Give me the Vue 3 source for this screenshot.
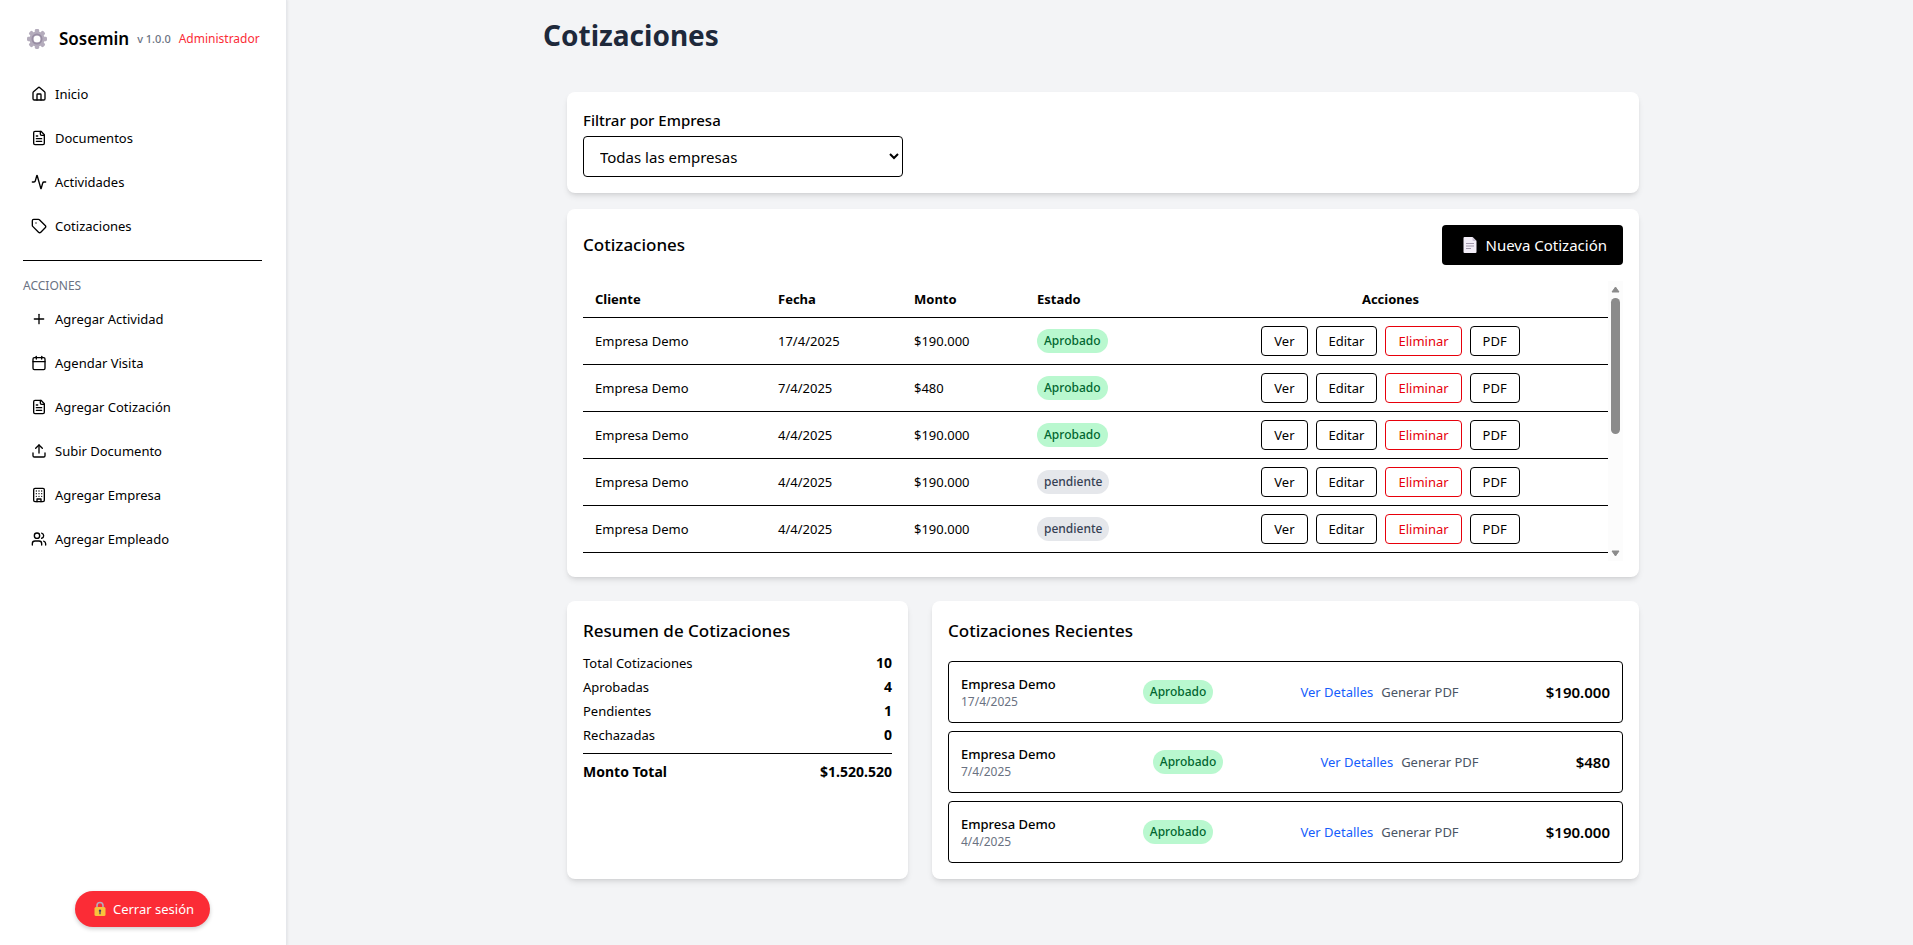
<script setup>
import { ref, computed } from 'vue'

const icons = {
  home: ['M15 21v-8a1 1 0 0 0-1-1h-4a1 1 0 0 0-1 1v8', 'M3 10a2 2 0 0 1 .709-1.528l7-5.999a2 2 0 0 1 2.582 0l7 5.999A2 2 0 0 1 21 10v9a2 2 0 0 1-2 2H5a2 2 0 0 1-2-2z'],
  file: ['M15 2H6a2 2 0 0 0-2 2v16a2 2 0 0 0 2 2h12a2 2 0 0 0 2-2V7Z', 'M14 2v4a2 2 0 0 0 2 2h4', 'M10 9H8', 'M16 13H8', 'M16 17H8'],
  activity: ['M22 12h-2.48a2 2 0 0 0-1.93 1.46l-2.35 8.36a.25.25 0 0 1-.48 0L9.24 2.18a.25.25 0 0 0-.48 0l-2.35 8.36A2 2 0 0 1 4.49 12H2'],
  tag: ['M12.586 2.586A2 2 0 0 0 11.172 2H4a2 2 0 0 0-2 2v7.172a2 2 0 0 0 .586 1.414l8.704 8.704a2.426 2.426 0 0 0 3.42 0l6.58-6.58a2.426 2.426 0 0 0 0-3.42z', 'M7.5 7.5h.01'],
  plus: ['M5 12h14', 'M12 5v14'],
  calendar: ['M8 2v4', 'M16 2v4', 'M5 4h14a2 2 0 0 1 2 2v14a2 2 0 0 1-2 2H5a2 2 0 0 1-2-2V6a2 2 0 0 1 2-2z', 'M3 10h18'],
  upload: ['M21 15v4a2 2 0 0 1-2 2H5a2 2 0 0 1-2-2v-4', 'M17 8l-5-5-5 5', 'M12 3v12'],
  building: ['M6 2h12a2 2 0 0 1 2 2v16a2 2 0 0 1-2 2H6a2 2 0 0 1-2-2V4a2 2 0 0 1 2-2z', 'M9 22v-4h6v4', 'M8 6h.01', 'M16 6h.01', 'M12 6h.01', 'M12 10h.01', 'M12 14h.01', 'M16 10h.01', 'M16 14h.01', 'M8 10h.01', 'M8 14h.01'],
  users: ['M16 21v-2a4 4 0 0 0-4-4H6a4 4 0 0 0-4 4v2', 'M9 3a4 4 0 1 0 0 8a4 4 0 1 0 0-8', 'M22 21v-2a4 4 0 0 0-3-3.87', 'M16 3.13a4 4 0 0 1 0 7.75'],
}

const nav = [
  { label: 'Inicio', icon: 'home' },
  { label: 'Documentos', icon: 'file' },
  { label: 'Actividades', icon: 'activity' },
  { label: 'Cotizaciones', icon: 'tag' },
]

const actions = [
  { label: 'Agregar Actividad', icon: 'plus' },
  { label: 'Agendar Visita', icon: 'calendar' },
  { label: 'Agregar Cotización', icon: 'file' },
  { label: 'Subir Documento', icon: 'upload' },
  { label: 'Agregar Empresa', icon: 'building' },
  { label: 'Agregar Empleado', icon: 'users' },
]

const company = ref('')

const quotes = [
  { date: '17/4/2025', amount: '$190.000', status: 'Aprobado' },
  { date: '7/4/2025', amount: '$480', status: 'Aprobado' },
  { date: '4/4/2025', amount: '$190.000', status: 'Aprobado' },
  { date: '4/4/2025', amount: '$190.000', status: 'pendiente' },
  { date: '4/4/2025', amount: '$190.000', status: 'pendiente' },
]

const summary = [
  { label: 'Total Cotizaciones', value: 10 },
  { label: 'Aprobadas', value: 4 },
  { label: 'Pendientes', value: 1 },
  { label: 'Rechazadas', value: 0 },
]

// Share of the full list that fits in the table's visible window
const thumbHeight = computed(() => {
  const rowHeight = 47
  const headHeight = 37
  const windowHeight = 280
  return `${Math.round((windowHeight / (headHeight + summary[0].value * rowHeight)) * 100)}%`
})

const gearTeeth = [0, 45, 90, 135, 180, 225, 270, 315]
</script>

<template>
  <div class="layout">
    <aside class="sidebar">
      <div class="brand">
        <svg class="gear" viewBox="0 0 20 20" aria-hidden="true">
          <rect v-for="a in gearTeeth" :key="a" x="7.800" y="0" width="4.400" height="6" rx="1.400" fill="#b4acbc" :transform="`rotate(${a} 10 10)`" />
          <circle cx="10" cy="10" r="5.600" fill="none" stroke="#b4acbc" stroke-width="4" />
          <circle cx="10" cy="10" r="4.600" fill="none" stroke="#998ea4" stroke-width="1.800" />
        </svg>
        <span class="brand-name">Sosemin</span>
        <span class="version">v 1.0.0</span>
        <span class="role">Administrador</span>
      </div>

      <nav class="menu">
        <a v-for="item in nav" :key="item.label" href="#" class="menu-item">
          <svg class="icon" viewBox="0 0 24 24" aria-hidden="true"><path v-for="d in icons[item.icon]" :key="d" :d="d" /></svg>
          {{ item.label }}
        </a>
      </nav>

      <div class="menu-title">ACCIONES</div>
      <nav class="menu">
        <a v-for="item in actions" :key="item.label" href="#" class="menu-item">
          <svg class="icon" viewBox="0 0 24 24" aria-hidden="true"><path v-for="d in icons[item.icon]" :key="d" :d="d" /></svg>
          {{ item.label }}
        </a>
      </nav>

      <button type="button" class="logout">
        <svg class="lock" viewBox="0 0 14 16" aria-hidden="true">
          <path d="M4 7V4.5a3 3 0 0 1 6 0V7" fill="none" stroke="#b4acbc" stroke-width="1.6" />
          <rect x="1.5" y="6" width="11" height="9" rx="1.5" fill="#f9c23c" />
          <path d="M7 8.4a1.3 1.3 0 0 1 .6 2.4v2.4h-1.2v-2.4A1.3 1.3 0 0 1 7 8.4z" fill="#433b6b" />
        </svg>
        Cerrar sesión
      </button>
    </aside>

    <main class="main">
      <div class="content">
        <h1 class="title">Cotizaciones</h1>

        <div class="panels">
          <section class="card filter">
            <label for="company" class="filter-label">Filtrar por Empresa</label>
            <select id="company" v-model="company" class="select">
              <option value="">Todas las empresas</option>
            </select>
          </section>

          <section class="card quotes">
            <header class="quotes-head">
              <h2 class="card-title">Cotizaciones</h2>
              <button type="button" class="new-quote">
                <svg class="page" viewBox="0 0 14 18" aria-hidden="true">
                  <path d="M1.5 1H9.5L13.5 5V16a1 1 0 0 1-1 1H1.5a1 1 0 0 1-1-1V2a1 1 0 0 1 1-1z" fill="#f3eef8" />
                  <path d="M9.5 1L13.5 5H10.5a1 1 0 0 1-1-1z" fill="#cdc4d6" />
                  <path d="M3 7.5h8M3 10h8M3 12.5h5" stroke="#998ea4" stroke-width="0.9" fill="none" />
                </svg>
                Nueva Cotización
              </button>
            </header>
            <div class="scroller">
              <div class="viewport">
                <table class="table">
                  <colgroup>
                    <col class="c-client" /><col class="c-date" /><col class="c-amount" /><col class="c-status" /><col />
                  </colgroup>
                  <thead>
                    <tr>
                      <th>Cliente</th><th>Fecha</th><th>Monto</th><th>Estado</th><th class="center">Acciones</th>
                    </tr>
                  </thead>
                  <tbody>
                    <tr v-for="(q, i) in quotes" :key="i">
                      <td>Empresa Demo</td>
                      <td>{{ q.date }}</td>
                      <td>{{ q.amount }}</td>
                      <td><span class="badge" :class="{ ok: q.status === 'Aprobado' }">{{ q.status }}</span></td>
                      <td>
                        <div class="row-actions">
                          <button type="button" class="btn">Ver</button>
                          <button type="button" class="btn">Editar</button>
                          <button type="button" class="btn danger">Eliminar</button>
                          <button type="button" class="btn">PDF</button>
                        </div>
                      </td>
                    </tr>
                  </tbody>
                </table>
              </div>
              <div class="scrollbar" aria-hidden="true">
                <svg class="arrow" viewBox="0 0 9 7"><path d="M4.5 1L8 6H1z" /></svg>
                <div class="track"><div class="thumb" :style="{ height: thumbHeight }"></div></div>
                <svg class="arrow" viewBox="0 0 9 7"><path d="M4.5 6L8 1H1z" /></svg>
              </div>
            </div>
          </section>

          <div class="bottom">
            <section class="card">
              <h2 class="card-title">Resumen de Cotizaciones</h2>
              <dl class="summary">
                <div v-for="s in summary" :key="s.label" class="summary-row">
                  <dt>{{ s.label }}</dt><dd>{{ s.value }}</dd>
                </div>
                <div class="summary-row total">
                  <dt>Monto Total</dt><dd>$1.520.520</dd>
                </div>
              </dl>
            </section>

            <section class="card">
              <h2 class="card-title">Cotizaciones Recientes</h2>
              <ul class="recent">
                <li v-for="(q, i) in quotes.slice(0, 3)" :key="i" class="recent-item">
                  <div>
                    <div class="recent-name">Empresa Demo</div>
                    <div class="recent-date">{{ q.date }}</div>
                  </div>
                  <span class="badge ok">{{ q.status }}</span>
                  <div class="recent-links">
                    <button type="button" class="link">Ver Detalles</button>
                    <button type="button" class="link muted">Generar PDF</button>
                  </div>
                  <div class="recent-amount">{{ q.amount }}</div>
                </li>
              </ul>
            </section>
          </div>
        </div>
      </div>
    </main>
  </div>
</template>

<style>
body {
  margin: 0;
  background: #f3f4f6;
}
</style>

<style scoped>
.layout,
.layout * {
  box-sizing: border-box;
}
.layout {
  display: flex;
  min-height: 100vh;
  font-family: "Segoe UI", "Noto Sans", sans-serif;
  font-size: 13px;
  line-height: 20px;
  color: #000;
}
button,
select {
  font-family: inherit;
  color: inherit;
  cursor: pointer;
}

.sidebar {
  flex: none;
  display: flex;
  flex-direction: column;
  width: 287px;
  padding: 23px 24px 18px 23px;
  background: #fff;
  border-right: 1px solid #e5e7eb;
  box-shadow: 1px 0 2px rgba(0, 0, 0, 0.06);
}
.brand {
  display: flex;
  align-items: center;
  height: 32px;
  padding-left: 4px;
  margin-bottom: 17px;
  white-space: nowrap;
}
.gear {
  width: 20px;
  height: 20px;
  margin-right: 12px;
}
.brand-name {
  font-size: 17px;
  font-weight: 600;
  margin-right: 8px;
}
.version {
  font-size: 11px;
  color: #6a7282;
  font-weight: 500;
  margin-right: 8px;
}
.role {
  font-size: 12px;
  color: #fb2c36;
}
.menu {
  display: flex;
  flex-direction: column;
}
.menu-item {
  display: flex;
  align-items: center;
  gap: 8px;
  height: 44px;
  padding: 0 8px;
  color: #000;
  text-decoration: none;
}
.icon {
  width: 16px;
  height: 16px;
  fill: none;
  stroke: currentColor;
  stroke-width: 2;
  stroke-linecap: round;
  stroke-linejoin: round;
}
.menu-title {
  margin-top: 12px;
  padding: 16px 0 2px;
  border-top: 1px solid #000;
  font-size: 12px;
  line-height: 18px;
  color: #6a7282;
}
.logout {
  display: flex;
  align-items: center;
  gap: 6px;
  height: 36px;
  margin: auto auto 0;
  padding: 0 16px 0 18px;
  border: 0;
  border-radius: 18px;
  background: #fb2c36;
  color: #fff;
  font-size: 13px;
  box-shadow: 0 2px 4px rgba(0, 0, 0, 0.2);
}
.lock {
  width: 14px;
  height: 16px;
}

.main {
  flex: 1;
  min-width: 0;
  padding: 15px 16px 40px 22px;
}
.content {
  max-width: 1120px;
  margin: 0 auto;
}
.title {
  margin: 0 0 13px;
  font-size: 28px;
  line-height: 40px;
  font-weight: 700;
  color: #1e293b;
}
.panels {
  padding: 24px;
}
.card {
  padding: 16px;
  border-radius: 8px;
  background: #fff;
  box-shadow: 0 4px 6px -1px rgba(0, 0, 0, 0.1), 0 2px 4px -2px rgba(0, 0, 0, 0.1);
}
.card-title {
  margin: 0;
  font-size: 17px;
  line-height: 28px;
  font-weight: 500;
}
.filter {
  margin-bottom: 16px;
}
.filter-label {
  display: block;
  margin-bottom: 4px;
  font-size: 15px;
  line-height: 24px;
  font-weight: 500;
}
.select {
  display: block;
  width: 320px;
  max-width: 100%;
  height: 41px;
  padding: 0 12px;
  border: 1px solid #000;
  border-radius: 4px;
  background: #fff;
  font-size: 15px;
}
.quotes {
  margin-bottom: 24px;
}
.quotes-head {
  display: flex;
  align-items: center;
  justify-content: space-between;
  margin-bottom: 16px;
}
.new-quote {
  display: flex;
  align-items: center;
  gap: 9px;
  height: 40px;
  padding: 0 16px 0 21px;
  border: 0;
  border-radius: 4px;
  background: #000;
  color: #fff;
  font-size: 15px;
}
.page {
  width: 14px;
  height: 18px;
}
.scroller {
  display: grid;
  grid-template-columns: minmax(0, 1fr) 15px;
  min-height: 280px;
}
.viewport {
  overflow: hidden;
}
.scrollbar {
  display: flex;
  flex-direction: column;
  align-items: center;
  gap: 5px;
  padding: 5px 0 4px;
  background: #fcfcfc;
}
.arrow {
  width: 9px;
  height: 7px;
  fill: #8b8b8b;
  stroke: #8b8b8b;
  stroke-width: 1;
  stroke-linejoin: round;
}
.track {
  flex: 1;
  width: 9px;
}
.thumb {
  border-radius: 5px;
  background: #8b8b8b;
}
.table {
  width: 100%;
  table-layout: fixed;
  border-collapse: separate;
  border-spacing: 0;
}
.c-client {
  width: 183px;
}
.c-date {
  width: 136px;
}
.c-amount {
  width: 123px;
}
.c-status {
  width: 148px;
}
.table th {
  padding: 8px 12px;
  border-bottom: 1px solid #000;
  text-align: left;
  font-weight: 700;
}
.table th.center {
  text-align: center;
}
.table td {
  padding: 8px 12px;
  border-bottom: 1px solid #000;
}
.badge {
  display: inline-block;
  vertical-align: middle;
  padding: 4px 7px;
  border-radius: 12px;
  background: #e5e7eb;
  color: #364153;
  font-size: 12px;
  line-height: 16px;
  font-weight: 500;
}
.badge.ok {
  background: #b9f8cf;
  color: #016630;
}
.row-actions {
  display: flex;
  justify-content: center;
  gap: 8px;
}
.btn {
  height: 30px;
  padding: 0 12px;
  border: 1px solid #000;
  border-radius: 4px;
  background: transparent;
  font-size: 13px;
}
.btn.danger {
  border-color: #e7000b;
  color: #e7000b;
}
.bottom {
  display: grid;
  grid-template-columns: minmax(0, 341fr) minmax(0, 707fr);
  gap: 24px;
}
.summary {
  margin: 8px 0 0;
}
.summary-row {
  display: flex;
  justify-content: space-between;
  margin-bottom: 4px;
}
.summary-row dd {
  margin: 0;
  font-size: 14px;
  font-weight: 700;
}
.summary-row.total {
  margin-top: 8px;
  padding-top: 8px;
  border-top: 1px solid #000;
  font-size: 14px;
  font-weight: 700;
}
.recent {
  display: flex;
  flex-direction: column;
  gap: 8px;
  margin: 16px 0 0;
  padding: 0;
  list-style: none;
}
.recent-item {
  display: flex;
  align-items: center;
  justify-content: space-between;
  height: 62px;
  padding: 0 12px;
  border: 1px solid #000;
  border-radius: 4px;
}
.recent-name {
  font-weight: 500;
}
.recent-date {
  font-size: 12px;
  line-height: 16px;
  color: #6a7282;
}
.recent-links {
  display: flex;
  gap: 8px;
}
.link {
  padding: 0;
  border: 0;
  background: none;
  font-size: 13px;
  line-height: 20px;
  color: #155dfc;
}
.link.muted {
  color: #4a5565;
}
.recent-amount {
  font-size: 15px;
  font-weight: 600;
}
</style>
